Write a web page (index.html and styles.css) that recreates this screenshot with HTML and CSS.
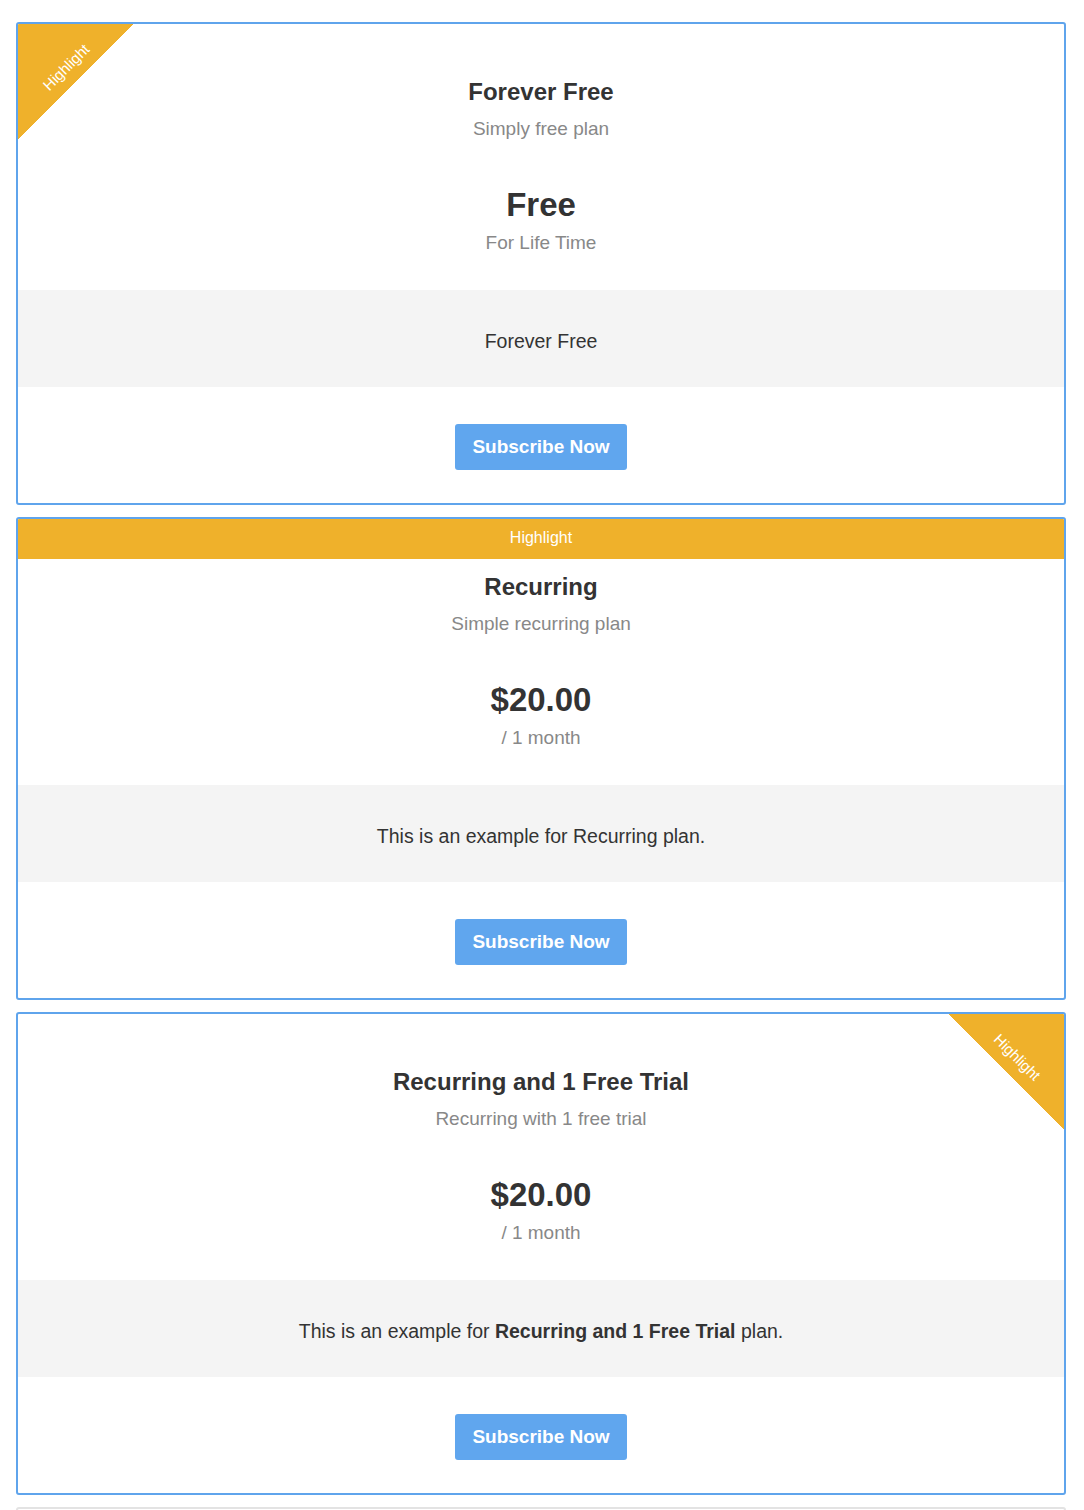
FILE: index.html
```html
<!DOCTYPE html>
<html lang="en">
<head>
  <meta charset="UTF-8">
  <meta name="viewport" content="width=device-width, initial-scale=1.0">
  <title>Pricing Plans</title>
  <link rel="stylesheet" href="styles.css">
</head>
<body>
  <div class="plans">

    <div class="plan plan-highlight">
      <div class="ribbon ribbon-left"><span>Highlight</span></div>
      <div class="plan-top"></div>
      <div class="plan-head">
        <h2 class="plan-title">Forever Free</h2>
        <div class="plan-subtitle">Simply free plan</div>
        <div class="plan-price">Free</div>
        <div class="plan-period">For Life Time</div>
      </div>
      <div class="plan-features">Forever Free</div>
      <div class="plan-action">
        <button class="subscribe-btn">Subscribe Now</button>
      </div>
    </div>

    <div class="plan plan-highlight">
      <div class="plan-top plan-banner">Highlight</div>
      <div class="plan-head">
        <h2 class="plan-title">Recurring</h2>
        <div class="plan-subtitle">Simple recurring plan</div>
        <div class="plan-price">$20.00</div>
        <div class="plan-period">/ 1 month</div>
      </div>
      <div class="plan-features">This is an example for Recurring plan.</div>
      <div class="plan-action">
        <button class="subscribe-btn">Subscribe Now</button>
      </div>
    </div>

    <div class="plan plan-highlight">
      <div class="ribbon ribbon-right"><span>Highlight</span></div>
      <div class="plan-top"></div>
      <div class="plan-head">
        <h2 class="plan-title">Recurring and 1 Free Trial</h2>
        <div class="plan-subtitle">Recurring with 1 free trial</div>
        <div class="plan-price">$20.00</div>
        <div class="plan-period">/ 1 month</div>
      </div>
      <div class="plan-features">This is an example for <strong>Recurring and 1 Free Trial</strong> plan.</div>
      <div class="plan-action">
        <button class="subscribe-btn">Subscribe Now</button>
      </div>
    </div>

    <!-- next plan, starts below the fold -->
    <div class="plan plan-next"></div>

  </div>
</body>
</html>
```

FILE: styles.css
```css
body {
  margin: 0;
  font-family: "Liberation Sans", Arial, sans-serif;
  color: #333;
  background-color: #fff;
}

.plans {
  padding: 22px 18px 0 16px;
  display: flex;
  flex-direction: column;
  gap: 12px;
}

.plan {
  position: relative;
  border: 2px solid #e3e3e3;
  border-radius: 3px;
  text-align: center;
  overflow: hidden;
}

.plan-highlight {
  border-color: #5fa4ec;
}

.plan-next {
  height: 40px;
}

.plan-top {
  height: 40px;
}

.plan-banner {
  background-color: #efb12b;
  color: #fff;
  font-size: 16px;
  line-height: 38px;
}

.plan-head {
  padding: 13px 20px 34px;
}

.plan-title {
  margin: 0;
  font-size: 24px;
  line-height: 30px;
  font-weight: bold;
}

.plan-subtitle {
  margin-top: 9px;
  font-size: 19px;
  line-height: 26px;
  color: #888;
}

.plan-price {
  margin-top: 43px;
  font-size: 33px;
  line-height: 40px;
  font-weight: bold;
}

.plan-period {
  margin-top: 5px;
  font-size: 19px;
  line-height: 26px;
  color: #888;
}

.plan-features {
  background-color: #f4f4f4;
  padding: 38px 20px 33px;
  font-size: 19.5px;
  line-height: 26px;
}

.plan-action {
  padding: 37px 0 33px;
}

.subscribe-btn {
  height: 46px;
  padding: 0 17px;
  border: none;
  border-radius: 3px;
  background-color: #60a6ee;
  color: #fff;
  font-family: inherit;
  font-size: 19px;
  font-weight: bold;
  cursor: pointer;
}

.ribbon {
  position: absolute;
  top: 0;
  width: 116px;
  height: 116px;
  color: #fff;
  font-size: 15px;
}

.ribbon span {
  position: absolute;
  top: 43px;
  white-space: nowrap;
}

.ribbon-left {
  left: 0;
  background: linear-gradient(135deg, #efb12b 50%, transparent 50%);
}

.ribbon-left span {
  left: 48px;
  transform: translate(-50%, -50%) rotate(-45deg);
}

.ribbon-right {
  right: 0;
  background: linear-gradient(225deg, #efb12b 50%, transparent 50%);
}

.ribbon-right span {
  right: 47px;
  transform: translate(50%, -50%) rotate(45deg);
}
```
